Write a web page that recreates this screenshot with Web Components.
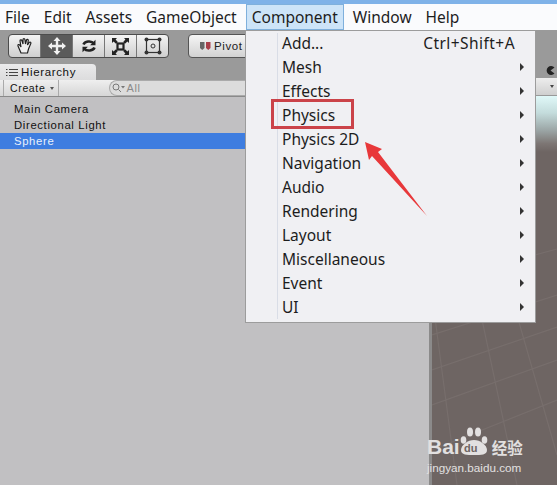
<!DOCTYPE html>
<html><head><meta charset="utf-8"><style>
html,body{margin:0;padding:0;background:#c1c0c2}
body{width:557px;height:485px;overflow:hidden;font-family:"Noto Sans","Open Sans",sans-serif}
</style></head><body>
<unity-app></unity-app>
<script>
const def=(n,html)=>customElements.define(n,class extends HTMLElement{constructor(){super();this.attachShadow({mode:'open'}).innerHTML=html;}});
def('menu-bar',`<style>
:host{display:flex;height:26px;background:#fafbfd;border-top:4px solid #7fb2e8;font:15.5px "Noto Sans",sans-serif;color:#1d1d1d;align-items:stretch}
</style><slot></slot>`);
def('menu-title',`<style>
:host{display:flex;align-items:center;padding:0 5px;margin-right:4px;white-space:nowrap;box-sizing:border-box}
:host([active]){background:#cde4f8;outline:1px solid #7fb0dc;outline-offset:-1px;margin:0 4px 0 0;padding:0 6px}
</style><slot></slot>`);
def('tool-strip',`<style>
:host{display:flex;height:34px;background:#9a9a9a;align-items:center;padding:0 0 2px 8px;gap:19px;box-sizing:border-box}
.g{display:flex;height:22px;border:1px solid #4c4c4c;border-radius:4px;overflow:hidden;background:linear-gradient(#f4f4f4,#cfcfcf)}
.g span{width:31px;display:flex;align-items:center;justify-content:center;border-left:1px solid #777}
.g span:first-child{border-left:0}
.g span.on{background:#5b5b5b}
svg{display:block}
.p{display:flex;align-items:center;gap:3px;height:22px;padding:0 6px 0 11px;border:1px solid #555;border-radius:4px 0 0 4px;background:linear-gradient(#f5f5f5,#d2d2d2);font:11.5px "Liberation Sans",sans-serif;letter-spacing:.6px;color:#222}
</style><div class="g">
<span><svg width="18" height="18" viewBox="0 0 18 18" fill="#f0f0f0" stroke="#222" stroke-width="1.2"><path d="M5 16 2 9c-.5-1.3 1-2 1.800-.9L5 10 4 4c-.2-1.300 1.500-1.700 1.900-.4L7 7V2.500c0-1.300 1.800-1.300 1.900 0L9.500 7l1-4c.4-1.200 2-.8 1.800.5L11.500 8l1.700-2.500c.8-1 2.200-.2 1.600 1L12.500 12l-1 4z"/></svg></span>
<span class="on"><svg width="20" height="20" viewBox="0 0 20 20" fill="#f2f2f2"><path d="M10 1l3.500 4H11.200v3.800H15V6.500l4 3.500-4 3.500v-2.300h-3.800V15h2.300L10 19l-3.500-4h2.300v-3.800H5v2.300L1 10l4-3.500v2.300h3.800V5H6.500z"/></svg></span>
<span><svg width="18" height="18" viewBox="0 0 18 18" fill="none" stroke="#222" stroke-width="2.600"><path d="M3.500 7.500C4.500 4.500 11 3 14 6.500"/><path d="M14.500 10.500C13.500 13.500 7 15 4 11.500"/><path d="M15.500 2.800v5.400h-5.400z" fill="#222" stroke="none"/><path d="M2.500 15.200V9.800h5.400z" fill="#222" stroke="none"/></svg></span>
<span><svg width="19" height="19" viewBox="0 0 19 19" fill="#222"><rect x="6.500" y="6.500" width="6" height="6" fill="none" stroke="#222" stroke-width="2.200"/><path d="M1 1h5L4.600 2.600 6.800 5 5 6.800 2.600 4.600 1 6zM18 1v5l-1.600-1.400L14 6.800 12.200 5l2.200-2.400L13 1zM1 18v-5l1.600 1.400L5 12.200 6.800 14l-2.200 2.400L6 18zM18 18h-5l1.400-1.600L12.200 14l1.800-1.800 2.400 2.200L18 13z"/></svg></span>
<span><svg width="20" height="20" viewBox="0 0 20 20" fill="#333"><rect x="3.500" y="3.500" width="13" height="13" fill="none" stroke="#333" stroke-width="1.200"/><circle cx="3.500" cy="3.500" r="2"/><circle cx="16.500" cy="3.500" r="2"/><circle cx="3.500" cy="16.500" r="2"/><circle cx="16.500" cy="16.500" r="2"/><circle cx="10" cy="10" r="2" fill="none" stroke="#333"/></svg></span>
</div><div class="p"><svg width="11" height="10" viewBox="0 0 11 10"><path d="M0 1h4.500v6L2.200 9 0 7z" fill="#666"/><path d="M6 1h4.500v6l-2.200 2L6 7z" fill="#a9404a"/></svg>Pivot</div>`);
def('hier-panel',`<style>
:host{display:block;width:429px;flex:none;position:relative;background:#c1c0c2;font:11.3px "Liberation Sans",sans-serif;letter-spacing:.65px;color:#111}
.tabs{height:16px;background:#9a9a9a;position:relative}
.tab{width:96px;height:16px;box-sizing:border-box;border-radius:0 4px 0 0;background:linear-gradient(#eaeaeb,#dcdcdd);position:absolute;left:0;top:0;padding:0 0 0 6px;display:flex;align-items:center;gap:3px;font-size:11.5px;color:#111}
.bar{height:16px;display:flex;align-items:center;background:linear-gradient(#efefef,#d6d6d6);border-bottom:1px solid #8a8a8a}
.cr{display:flex;align-items:center;gap:5px;height:100%;padding:0 4px 0 6px;margin-left:3px;border-left:1px solid #aaa;border-right:1px solid #aaa;font-size:10.5px}
.cr i{width:0;height:0;border:2.500px solid transparent;border-top:3px solid #555;border-bottom:0}
.s{margin-left:50px;flex:1;height:14px;display:flex;align-items:center;border:1px solid #aaa;border-right:0;border-radius:8px 0 0 8px;background:#dcdcdc;color:#8a8a8a;font-size:11px;padding-left:2px}
.list{padding-top:4px}
::slotted(*){display:block;height:16px;line-height:16px;padding-left:14px}
::slotted([sel]){background:#3e7de0;color:#e9f1fc}
</style>
<div class="tabs"><div class="tab"><svg width="12" height="9" viewBox="0 0 12 9" fill="none" stroke="#444"><path d="M3 1.500h9M3 4.500h9M3 7.500h9M0 1.500h1.500M0 4.500h1.500M0 7.500h1.500"/></svg>Hierarchy</div></div>
<div class="bar"><div class="cr">Create<i></i></div><div class="s"><svg width="14" height="10" viewBox="0 0 14 10" fill="none" stroke="#777"><circle cx="4" cy="4" r="3"/><path d="M6.500 6.500 9 9"/><path d="M9 3h4l-2 2.500z" fill="#777" stroke="none"/></svg>All</div></div>
<div class="list"><slot></slot></div>`);
def('scene-view',`<style>
:host{display:block;flex:1;position:relative;overflow:hidden;background:#6e6563;box-sizing:border-box;border-left:3px solid #8b8a8a}
.top{height:14px;background:#9a9a9a;position:relative}
.bar{height:17px;background:linear-gradient(#ededed,#cfcfcf);border-bottom:1px solid #999;position:relative}
.bar i{position:absolute;right:3px;top:7px;width:0;height:0;border:2.500px solid transparent;border-top:3px solid #444;border-bottom:0}
.sky{height:56px;background:linear-gradient(#e0f8f8 0,#c4dcdc 30%,#9aa4a4 62%,#7d7674 85%,#6e6563 100%)}
.eye{position:absolute;right:2px;top:2px}
svg.g{position:absolute;left:0;bottom:0}
</style><div class="top"><svg class="eye" width="9" height="9" viewBox="0 0 9 9"><path d="M8.500 1.500A4.500 4.500 0 1 0 8.500 7.500L4.500 4.500z" fill="#222"/></svg></div><div class="bar"><i></i></div><div class="sky"></div>
<svg class="g" width="125" height="320" viewBox="0 0 125 320" fill="none" stroke="#776e6c" stroke-width="1.200"><path d="M0 118 125 84M0 170 125 130M0 205 125 162M0 240 125 195M0 285 125 235M30 60 85 320M62 70 125 290M0 130 25 320"/></svg>`);
def('app-menu',`<style>
:host{display:block;position:absolute;left:245px;top:30px;width:291px;height:293px;box-sizing:border-box;background:#f0f0f3;border:1px solid #9c9c9c;font:15.5px "Noto Sans",sans-serif;color:#1d1d1d}
:host::before{content:"";position:absolute;left:31px;top:2px;bottom:3px;width:1px;background:#d9dde6}
</style><slot></slot>`);
class MenuRow extends HTMLElement{constructor(){super();const s=this.attachShadow({mode:'open'});const k=this.getAttribute('key');s.innerHTML=`<style>
:host{display:flex;height:24px;align-items:center;padding-left:36px}
.k{margin-left:auto;margin-right:20px;letter-spacing:.45px}
.a{margin-left:auto;margin-right:11px;width:0;height:0;border-left:4px solid #333;border-top:4px solid transparent;border-bottom:4px solid transparent}
</style><slot></slot>`+(k?`<span class="k">${k}</span>`:`<span class="a"></span>`);}}
customElements.define('m-row',MenuRow);
def('callout-marks',`<style>
:host{display:block;position:absolute;left:0;top:0;width:557px;height:485px;pointer-events:none}
.b{position:absolute;left:271px;top:99px;width:83px;height:30px;box-sizing:border-box;border:3px solid #cb4349}
svg{position:absolute;left:0;top:0}
</style><div class="b"></div><svg width="557" height="485"><path d="M365 142 382 149 378 152 427 216 372 156 369 160z" fill="#e8383a"/></svg>`);
def('wm-logo',`<style>
:host{display:block;position:absolute;left:427px;top:427px;width:100px;height:48px;color:#e2e0e0;font-family:"Liberation Sans",sans-serif}
.r{display:flex;align-items:center;font-weight:700;font-size:21px;height:18px;margin-top:11px;line-height:18px}
.c{font:700 15.500px "Noto Sans CJK SC",sans-serif;margin-left:2px}
.u{font-size:11.700px;margin-top:5px;white-space:nowrap}
.paw{position:absolute;left:33px;top:0}
.du{position:absolute;left:37px;top:16px;font-size:11px;font-weight:700;line-height:11px;color:#6e6563}
</style><svg class="paw" width="28" height="28" viewBox="0 0 28 28" fill="#e2e0e0"><ellipse cx="3.500" cy="13" rx="2.800" ry="3.800"/><ellipse cx="10" cy="5" rx="3" ry="4.500"/><ellipse cx="18" cy="5" rx="3" ry="4.500"/><ellipse cx="24.500" cy="13" rx="2.800" ry="3.800"/><path d="M1 23c0-5 7-10 13-10s13 5 13 10-6 5-13 5-13 0-13-5z"/></svg><span class="du">du</span>
<div class="r">Bai<span style="width:30px"></span><span class="c">经验</span></div><div class="u">jingyan.baidu.com</div>`);
def('unity-app',`<style>
:host{display:block;position:relative;width:557px;height:485px;overflow:hidden}
.main{display:flex;height:421px}
</style>
<menu-bar>
<menu-title>File</menu-title><menu-title>Edit</menu-title><menu-title>Assets</menu-title><menu-title>GameObject</menu-title><menu-title active>Component</menu-title><menu-title>Window</menu-title><menu-title>Help</menu-title>
</menu-bar>
<tool-strip></tool-strip>
<div class="main"><hier-panel><div>Main Camera</div><div>Directional Light</div><div sel>Sphere</div></hier-panel><scene-view></scene-view></div>
<app-menu>
<m-row key="Ctrl+Shift+A">Add...</m-row><m-row>Mesh</m-row><m-row>Effects</m-row><m-row>Physics</m-row><m-row>Physics 2D</m-row><m-row>Navigation</m-row><m-row>Audio</m-row><m-row>Rendering</m-row><m-row>Layout</m-row><m-row>Miscellaneous</m-row><m-row>Event</m-row><m-row>UI</m-row>
</app-menu>
<callout-marks></callout-marks><wm-logo></wm-logo>`);
</script></body></html>
